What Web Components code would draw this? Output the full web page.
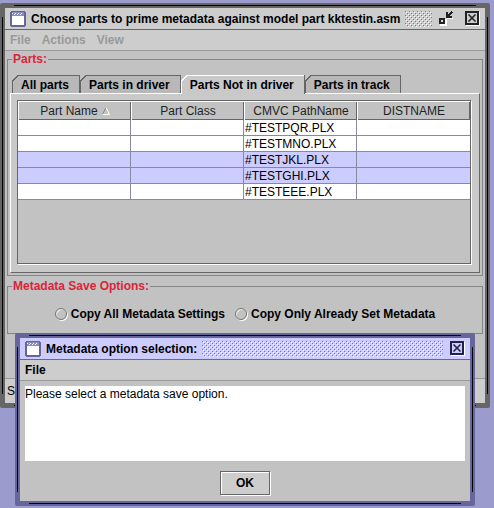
<!DOCTYPE html>
<html lang="en">
<head>
<meta charset="utf-8">
<title>Choose parts to prime metadata</title>
<style>
body { margin: 0; padding: 3px 4px 0 0; background: #9c9bce; font: 12px/14px "Liberation Sans", Arial, sans-serif; color: #000; min-height: 100vh; box-sizing: border-box; position: relative; }
</style>
</head>
<body>
<parts-app></parts-app>
<script>
const define = (name, html, setup) => customElements.define(name, class extends HTMLElement {
  connectedCallback() {
    if (this.shadowRoot) return;
    const t = document.createElement('template');
    t.innerHTML = html;
    this.attachShadow({ mode: 'open' }).append(t.content.cloneNode(true));
    if (setup) setup(this, this.shadowRoot);
  }
});

define('window-icon', `<style>:host{display:block;width:16px;height:16px}svg{display:block}</style>
<svg width="16" height="16" viewBox="0 0 16 16" shape-rendering="crispEdges" aria-hidden="true">
<path fill="#66669a" d="M1 0h14v1h1v14h-1v1H1v-1H0V1h1z"/><path fill="#8c8cc4" d="M2 1h12v4H2z"/><path fill="#fff" d="M2 5h12v9H2z"/>
<path fill="#fff" d="M2 2h1v1H2zM5 2h1v1H5zM8 2h1v1H8zM11 2h1v1h-1zM4 3h1v1H4zM7 3h1v1H7zM10 3h1v1h-1z"/></svg>`);

define('metal-window', `<style>
:host { display:block; --edge:#666; --face:#cdcdcd; --dot:#777; --ink:#222; box-sizing:border-box; border:5px solid var(--edge); border-radius:2px; background:#c2c2c2; position:relative; }
:host(.dialog) { --edge:#66669c; --face:#ccccff; --dot:#7474a8; --ink:#222248; }
.line { position:absolute; pointer-events:none; background:#000; }
.t,.b { left:9px; right:9px; height:1px; } .l,.r { top:9px; bottom:9px; width:1px; }
.t { top:-3px; } .b { bottom:-3px; } .l { left:-3px; } .r { right:-3px; }
header { display:flex; align-items:center; height:21px; padding:0 5px; background:var(--face); border-bottom:1px solid var(--edge); }
h1 { font:bold 12px/14px "Liberation Sans",Arial,sans-serif; margin:0 5px; white-space:nowrap; }
.bumps { flex:1; height:16px; margin-right:7px; background:
 radial-gradient(circle at .5px .5px,var(--dot) 0 .4px,transparent .6px) 0 0/4px 4px,
 radial-gradient(circle at .5px .5px,var(--dot) 0 .4px,transparent .6px) 2px 2px/4px 4px,
 radial-gradient(circle at .5px .5px,#fff 0 .4px,transparent .6px) 3px 3px/4px 4px,
 radial-gradient(circle at .5px .5px,#fff 0 .4px,transparent .6px) 1px 1px/4px 4px; }
button { border:0; padding:0; background:none; width:15px; height:15px; display:block; }
.min { margin-right:11px; }
:host(.dialog) .min { display:none; }
svg { display:block; }
</style>
<i class="line t"></i><i class="line b"></i><i class="line l"></i><i class="line r"></i>
<header><window-icon></window-icon><h1><slot name="title"></slot></h1><div class="bumps"></div>
<button class="min" type="button" aria-label="Restore"><svg width="15" height="15" viewBox="0 0 15 15" shape-rendering="crispEdges"><path fill="#fff" d="M1 8h7v7H1zM8 7h6v1H8z"/><path fill="#222" d="M0 7h6v6H0zM7 1h2v4h4v2H7z"/><path fill="#ddd" d="M2 9h2v2H2z"/><path stroke="#222" stroke-width="2" d="M8 6l5-5"/></svg></button>
<button type="button" aria-label="Close"><svg width="15" height="15" viewBox="0 0 15 15" shape-rendering="crispEdges"><path fill="#fff" d="M1 1h14v14H1z"/><path style="fill:var(--ink)" d="M0 0h14v14H0z"/><path style="fill:var(--face)" d="M2 2h10v10H2z"/><path style="stroke:var(--ink)" stroke-width="1.6" shape-rendering="auto" d="M3.5 3.5l7 7M10.5 3.5l-7 7"/></svg></button>
</header><slot></slot>`);

define('menu-bar', `<style>
:host { display:flex; height:20px; align-items:center; gap:11px; padding:0 5px; background:#cdcdcd; border-bottom:1px solid #999; }
</style><slot></slot>`);

define('menu-item', `<style>
:host { display:block; } button { border:0; background:none; padding:0; font:bold 12px/14px "Liberation Sans",Arial,sans-serif; color:#000; display:block; } button:disabled { color:#999; }
</style><button type="button"><slot></slot></button>`, (h, r) => { r.querySelector('button').disabled = h.hasAttribute('disabled'); });

define('group-box', `<style>
:host { display:block; margin:1px 2px 0; }
fieldset { margin:0; min-width:0; border:1px solid #858585; padding:0 2px 2px; }
legend { padding:0 1px; margin-left:2px; font:bold 12px/14px "Liberation Sans",Arial,sans-serif; color:#dc2439; }
</style><fieldset><legend><slot name="legend"></slot></legend><slot></slot></fieldset>`);

define('tab-item', `<style>
:host { display:block; --c:#b8b8b8; --e:#666; }
:host([selected]) { --c:#c9c9c9; --e:#fff; }
button { display:block; height:18px; border:0; border-right:1px solid #666; padding:1px 10px 0 9px; font:bold 12px/14px "Liberation Sans",Arial,sans-serif; color:#000; white-space:nowrap;
 background: linear-gradient(var(--e),var(--e)) 6px 0/100% 1px no-repeat, linear-gradient(var(--e),var(--e)) 0 6px/1px 100% no-repeat, linear-gradient(135deg,transparent 4px,var(--e) 4px 5px,var(--c) 5px); }
:host([selected]) button { height:19px; padding-bottom:1px; position:relative; }
</style><button type="button" role="tab"><slot></slot></button>`, (h, r) => r.querySelector('button').setAttribute('aria-selected', h.hasAttribute('selected')));

define('tab-panel', `<style>
:host { display:block; padding-top:9px; }
.tabs { display:flex; height:18px; padding-left:2px; }
.pane { border:1px solid #666; border-top-color:#fff; border-left:1px solid #fff; padding:6px 8px 8px 6px; background:#c9c9c9; }
</style><div class="tabs" role="tablist"><slot name="tab"></slot></div><div class="pane" role="tabpanel"><slot></slot></div>`);

define('parts-table', `<style>
:host { display:block; border:1px solid #666; box-shadow:1px 1px 0 #fff; background:#c2c2c2; min-height:162px; }
table { width:100%; border-collapse:separate; border-spacing:0; table-layout:fixed; font:12px/14px "Liberation Sans",Arial,sans-serif; }
th { font-weight:normal; height:19px; padding:0; box-sizing:border-box; border:1px solid #fff; border-width:1px 0 0 1px; box-shadow:inset -1px -1px 0 #666; color:#222; }
td { height:16px; box-sizing:border-box; padding:0 1px; border-right:1px solid #8888a0; border-bottom:1px solid #8888a0; background:#fff; overflow:hidden; white-space:nowrap; }
td:last-child { border-right:0; }
tr.sel td { background:#ccccff; }
svg { margin-left:4px; }
</style>
<table><thead><tr><th scope="col">Part Name<svg width="8" height="8" viewBox="0 0 8 8" aria-hidden="true"><path d="M4 .5L.5 7.5" stroke="#888" fill="none"/><path d="M4 .5l3.5 7h-7" stroke="#fff" fill="none"/></svg></th><th scope="col">Part Class</th><th scope="col">CMVC PathName</th><th scope="col">DISTNAME</th></tr></thead>
<tbody><tr><td></td><td></td><td>#TESTPQR.PLX</td><td></td></tr>
<tr><td></td><td></td><td>#TESTMNO.PLX</td><td></td></tr>
<tr class="sel"><td></td><td></td><td>#TESTJKL.PLX</td><td></td></tr>
<tr class="sel"><td></td><td></td><td>#TESTGHI.PLX</td><td></td></tr>
<tr><td></td><td></td><td>#TESTEEE.PLX</td><td></td></tr></tbody></table>`);

define('save-options', `<style>
:host { display:flex; justify-content:center; gap:10px; padding:14px 0 10px; }
label { display:flex; align-items:center; gap:4px; font:bold 12px/14px "Liberation Sans",Arial,sans-serif; white-space:nowrap; }
input { appearance:none; margin:0; width:12px; height:12px; box-sizing:border-box; border:1px solid #777; border-radius:50%; box-shadow:1px 1px 0 #fff, inset 1px 1px 0 #eee; }
</style><label><input type="radio" name="save">Copy All Metadata Settings</label><label><input type="radio" name="save">Copy Only Already Set Metadata</label>`);

define('status-bar', `<style>:host { display:block; margin-top:44px; border-top:1px solid #999; background:#cdcdcd; padding:5px 2px; }</style><slot></slot>`);

define('message-body', `<style>
:host { display:block; padding:5px 5px 6px; }
textarea { display:block; width:100%; height:75px; box-sizing:border-box; border:0; margin:0; padding:1px 0; resize:none; background:#fff; color:#000; font:12px/14px "Liberation Sans",Arial,sans-serif; outline:0; }
button { display:block; margin:10px auto 0; height:24px; padding:0 15px; border:1px solid #666; box-shadow:1px 1px 0 #fff, inset 1px 1px 0 #fff; background:#cdcdcd; color:#000; font:bold 12px/14px "Liberation Sans",Arial,sans-serif; }
</style><textarea readonly aria-label="Message">Please select a metadata save option.</textarea><button type="button">OK</button>`);

define('parts-app', `<style>
:host { display:block; }
.dialog { position:absolute; left:15px; right:19px; top:333px; }
.second { margin-top:3px; }
</style>
<metal-window><span slot="title">Choose parts to prime metadata against model part kktestin.asm</span>
<menu-bar><menu-item disabled>File</menu-item><menu-item disabled>Actions</menu-item><menu-item disabled>View</menu-item></menu-bar>
<group-box><span slot="legend">Parts:</span>
<tab-panel><tab-item slot="tab">All parts</tab-item><tab-item slot="tab">Parts in driver</tab-item><tab-item slot="tab" selected>Parts Not in driver</tab-item><tab-item slot="tab">Parts in track</tab-item>
<parts-table></parts-table></tab-panel></group-box>
<group-box class="second"><span slot="legend">Metadata Save Options:</span><save-options></save-options></group-box>
<status-bar>S</status-bar></metal-window>
<metal-window class="dialog" role="dialog"><span slot="title">Metadata option selection:</span>
<menu-bar><menu-item>File</menu-item></menu-bar><message-body></message-body></metal-window>`);
</script>
</body>
</html>
